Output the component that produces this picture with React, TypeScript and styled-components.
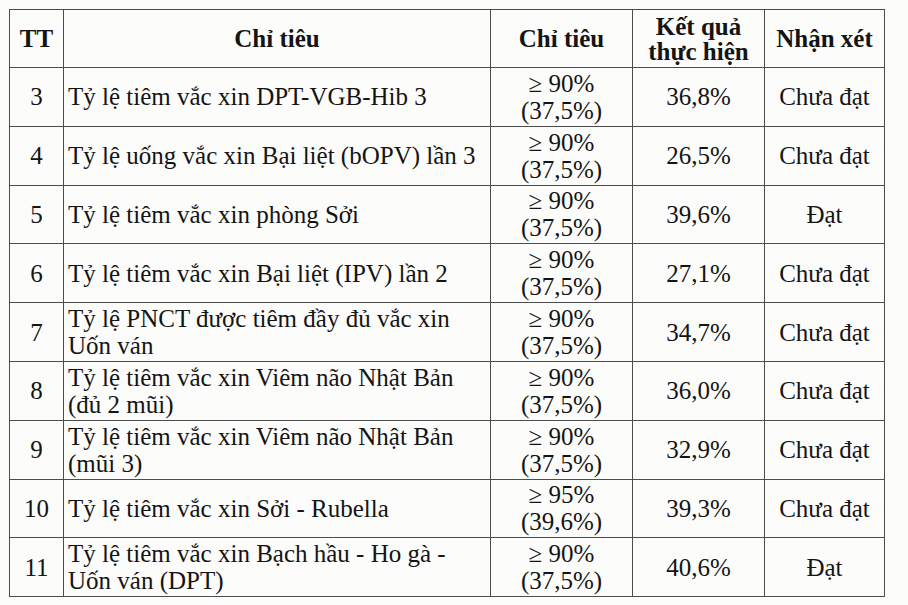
import React from "react";
import styled, { createGlobalStyle } from "styled-components";

const GlobalStyle = createGlobalStyle`
  html, body {
    margin: 0;
    padding: 0;
    background: #fcfcfb;
  }
  body {
    font-family: "Liberation Serif", "Times New Roman", serif;
    color: #141414;
  }
`;

const Page = styled.div`
  padding: 9px 0 0 9px;
  width: 908px;
  height: 605px;
  box-sizing: border-box;
  overflow: hidden;
`;

const Table = styled.table`
  border-collapse: collapse;
  table-layout: fixed;
  width: 875px;
  font-size: 25px;
  line-height: 27px;
`;

const HeadRow = styled.tr`
  height: 58px;
`;

const Row = styled.tr`
  height: 58.8px;
`;

const Th = styled.th`
  border: 1.5px solid #4d4d4d;
  font-weight: bold;
  text-align: center;
  vertical-align: middle;
  padding: 0 2px;
  line-height: 25px;
`;

const Td = styled.td<{ $left?: boolean }>`
  border: 1.5px solid #4d4d4d;
  text-align: ${(p) => (p.$left ? "left" : "center")};
  vertical-align: middle;
  padding: ${(p) => (p.$left ? "0 0 0 4px" : "0 2px")};
  white-space: nowrap;
`;

type Item = {
  tt: string;
  name: string[];
  target: string;
  base: string;
  result: string;
  ok: boolean;
};

const rows: Item[] = [
  { tt: "3", name: ["Tỷ lệ tiêm vắc xin DPT-VGB-Hib 3"], target: "≥ 90%", base: "(37,5%)", result: "36,8%", ok: false },
  { tt: "4", name: ["Tỷ lệ uống vắc xin Bại liệt (bOPV) lần 3"], target: "≥ 90%", base: "(37,5%)", result: "26,5%", ok: false },
  { tt: "5", name: ["Tỷ lệ tiêm vắc xin phòng Sởi"], target: "≥ 90%", base: "(37,5%)", result: "39,6%", ok: true },
  { tt: "6", name: ["Tỷ lệ tiêm vắc xin Bại liệt (IPV) lần 2"], target: "≥ 90%", base: "(37,5%)", result: "27,1%", ok: false },
  { tt: "7", name: ["Tỷ lệ PNCT được tiêm đầy đủ vắc xin", "Uốn ván"], target: "≥ 90%", base: "(37,5%)", result: "34,7%", ok: false },
  { tt: "8", name: ["Tỷ lệ tiêm vắc xin Viêm não Nhật Bản", "(đủ 2 mũi)"], target: "≥ 90%", base: "(37,5%)", result: "36,0%", ok: false },
  { tt: "9", name: ["Tỷ lệ tiêm vắc xin Viêm não Nhật Bản", "(mũi 3)"], target: "≥ 90%", base: "(37,5%)", result: "32,9%", ok: false },
  { tt: "10", name: ["Tỷ lệ tiêm vắc xin Sởi - Rubella"], target: "≥ 95%", base: "(39,6%)", result: "39,3%", ok: false },
  { tt: "11", name: ["Tỷ lệ tiêm vắc xin Bạch hầu - Ho gà -", "Uốn ván (DPT)"], target: "≥ 90%", base: "(37,5%)", result: "40,6%", ok: true },
];

const Lines = ({ lines }: { lines: string[] }) => (
  <>
    {lines.map((l, i) => (
      <React.Fragment key={i}>
        {i > 0 && <br />}
        {l}
      </React.Fragment>
    ))}
  </>
);

export default function App() {
  return (
    <Page>
      <GlobalStyle />
      <Table>
        <colgroup>
          <col style={{ width: 54 }} />
          <col style={{ width: 427 }} />
          <col style={{ width: 142 }} />
          <col style={{ width: 132 }} />
          <col style={{ width: 120 }} />
        </colgroup>
        <thead>
          <HeadRow>
            <Th>TT</Th>
            <Th>Chỉ tiêu</Th>
            <Th>Chỉ tiêu</Th>
            <Th>
              Kết quả
              <br />
              thực hiện
            </Th>
            <Th>Nhận xét</Th>
          </HeadRow>
        </thead>
        <tbody>
          {rows.map((r) => (
            <Row key={r.tt}>
              <Td>{r.tt}</Td>
              <Td $left>
                <Lines lines={r.name} />
              </Td>
              <Td>
                {r.target}
                <br />
                {r.base}
              </Td>
              <Td>{r.result}</Td>
              <Td>{r.ok ? "Đạt" : "Chưa đạt"}</Td>
            </Row>
          ))}
        </tbody>
      </Table>
    </Page>
  );
}
